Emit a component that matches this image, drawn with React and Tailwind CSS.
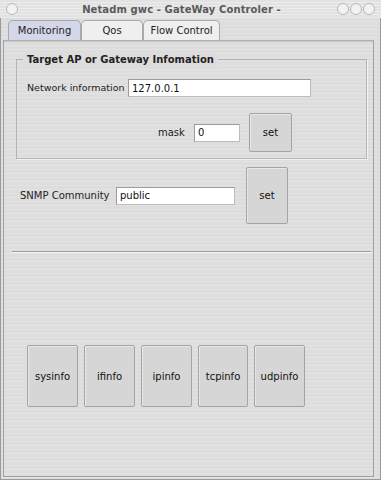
import React from "react";

const font = { fontFamily: '"DejaVu Sans", "Liberation Sans", sans-serif' };

function Dot({ className = "" }) {
  return (
    <span
      className={`inline-block w-[12px] h-[12px] rounded-full border border-[#b8b8b8] bg-[#f2f2f2] ${className}`}
    />
  );
}

function Tab({ label, active, className = "" }) {
  return (
    <div
      className={`h-[20px] flex items-center justify-center text-[10px] text-[#222] border border-b-0 border-[#a9a9a9] rounded-t-[5px] ${
        active ? "bg-[#d3d7e9]" : "bg-[#efefef]"
      } ${className}`}
    >
      {label}
    </div>
  );
}

function Field({ value, className = "" }) {
  return (
    <div
      className={`h-[18px] bg-white border border-[#bdbdbd] border-t-[#9c9c9c] border-l-[#9c9c9c] flex items-center pl-[3px] text-[10px] text-[#111] ${className}`}
    >
      {value}
    </div>
  );
}

function Btn({ label, className = "" }) {
  return (
    <button
      type="button"
      className={`bg-[#d6d6d6] border border-[#a4a4a4] rounded-[2px] text-[10px] text-[#111] flex items-center justify-center shadow-[inset_1px_1px_0_#e8e8e8] ${className}`}
    >
      {label}
    </button>
  );
}

export default function App() {
  return (
    <div
      style={font}
      className="w-[381px] h-[480px] bg-[#dcdcdc] overflow-hidden flex flex-col"
    >
      {/* title bar */}
      <div className="h-[18px] flex items-center px-[6px] bg-[repeating-linear-gradient(180deg,#e2e2e2_0px,#e2e2e2_2px,#ececec_2px,#ececec_3px)] shrink-0">
        <Dot />
        <div className="flex-1 text-center text-[10px] font-bold text-[#5a5a5a] tracking-[0.1px] pl-[8px]">
          Netadm gwc - GateWay Controler -
        </div>
        <div className="flex gap-[1px]">
          <Dot />
          <Dot />
          <Dot />
        </div>
      </div>

      {/* window body */}
      <div className="flex-1 border-x border-b border-[#9a9a9a] flex flex-col bg-[repeating-linear-gradient(180deg,#dddddd_0px,#dddddd_3px,#e3e3e3_3px,#e3e3e3_4px)]">
        {/* tabs */}
        <div className="flex pl-[7px] pt-[2px] h-[22px] shrink-0">
          <Tab label="Monitoring" active className="w-[73px]" />
          <Tab label="Qos" className="w-[62px]" />
          <Tab label="Flow Control" className="w-[77px]" />
        </div>

        {/* panel */}
        <div className="flex-1 ml-[2px] mr-[6px] mb-[2px] border border-[#a0a0a0] border-t-[#b0b0b0] shadow-[inset_0_1px_0_#c8c8c8] flex flex-col">
          {/* group box */}
          <div className="mt-[18px] ml-[12px] w-[351px] h-[100px] border border-[#b4b4b4] shadow-[1px_1px_0_#f2f2f2] relative">
            <div className="absolute -top-[8px] left-[6px] px-[4px] bg-[#dddddd] text-[10px] font-bold text-[#222] whitespace-nowrap">
              Target AP or Gateway Infomation
            </div>
            <div className="flex items-center mt-[19px] pl-[10px]">
              <span className="w-[101px] text-[9.5px] text-[#222] whitespace-nowrap">Network information</span>
              <Field value="127.0.0.1" className="w-[183px]" />
            </div>
            <div className="flex items-center mt-[16px]">
              <span className="ml-[141px] w-[36px] text-[10px] text-[#222]">mask</span>
              <Field value="0" className="w-[46px]" />
              <Btn label="set" className="ml-[9px] w-[43px] h-[39px]" />
            </div>
          </div>

          {/* snmp */}
          <div className="flex items-center mt-[8px] ml-[16px] h-[57px]">
            <span className="w-[96px] text-[10px] text-[#222] whitespace-nowrap">SNMP Community</span>
            <Field value="public" className="w-[119px]" />
            <Btn label="set" className="ml-[11px] w-[42px] h-[57px]" />
          </div>

          {/* separator */}
          <div className="mt-[27px] ml-[8px] w-[359px] h-[2px] border-t border-[#9d9d9d] border-b border-b-[#f4f4f4]" />

          {/* info buttons */}
          <div className="flex mt-[92px] ml-[23px] gap-[6px]">
            <Btn label="sysinfo" className="w-[51px] h-[62px]" />
            <Btn label="ifinfo" className="w-[51px] h-[62px]" />
            <Btn label="ipinfo" className="w-[51px] h-[62px]" />
            <Btn label="tcpinfo" className="w-[50px] h-[62px]" />
            <Btn label="udpinfo" className="w-[51px] h-[62px]" />
          </div>
        </div>
      </div>
    </div>
  );
}
